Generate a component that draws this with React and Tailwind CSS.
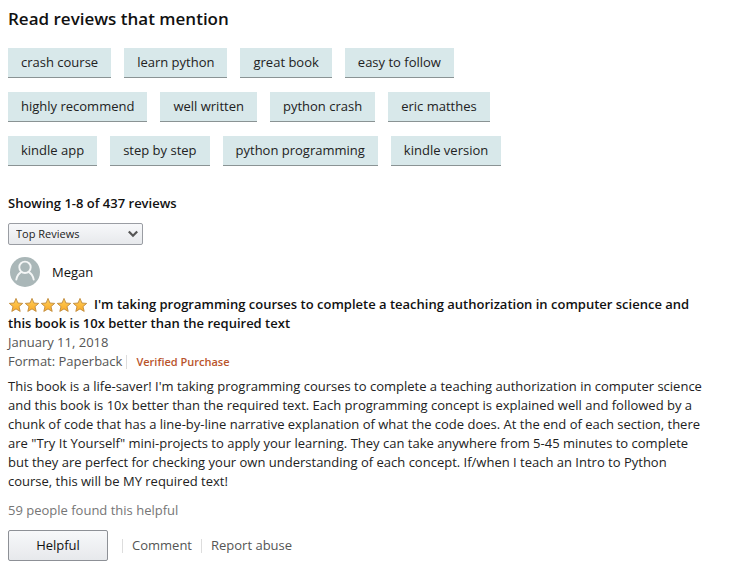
import React from 'react';

const topics = [
  'crash course', 'learn python', 'great book', 'easy to follow',
  'highly recommend', 'well written', 'python crash', 'eric matthes',
  'kindle app', 'step by step', 'python programming', 'kindle version',
];

function Star() {
  return (
    <svg viewBox="0 0 16 16" className="size-4" aria-hidden="true">
      <path
        d="M8 1.4 L9.9 6 L14.7 6.4 L11 9.6 L12.2 14.4 L8 11.9 L3.8 14.4 L5 9.6 L1.3 6.4 L6.1 6 Z"
        fill="url(#starFill)"
        stroke="#c08a3c"
        strokeWidth="0.9"
        strokeLinejoin="round"
      />
    </svg>
  );
}

function Rating() {
  return (
    <span role="img" aria-label="5 out of 5 stars" className="mr-1.5 inline-flex align-text-bottom">
      <svg className="absolute size-0" aria-hidden="true">
        <defs>
          <linearGradient id="starFill" x1="0" y1="0" x2="0" y2="1">
            <stop offset="0" stopColor="#ffd05a" />
            <stop offset="1" stopColor="#f9a928" />
          </linearGradient>
        </defs>
      </svg>
      {[1, 2, 3, 4, 5].map((n) => <Star key={n} />)}
    </span>
  );
}

function Avatar() {
  return (
    <svg viewBox="0 0 30 30" className="size-[30px]" aria-hidden="true">
      <circle cx="15" cy="15" r="15" fill="#aab7b8" />
      <g fill="none" stroke="#f4f6f6" strokeWidth="1.9" strokeLinecap="round">
        <circle cx="15" cy="10.3" r="5.7" />
        <path d="M6.3 22.6 C7 19 8.5 16.6 11.5 14.9 M23.7 22.6 C23 19 21.5 16.6 18.5 14.9" />
      </g>
    </svg>
  );
}

function SortSelect() {
  return (
    <div className="relative mt-2.5 w-[135px]">
      <select
        aria-label="Sort reviews"
        className="block h-[22px] w-full appearance-none rounded-xs border border-[#9a9da3] bg-linear-to-b from-[#f7f8fa] to-[#e7e9ec] pl-[7px] text-[11px] leading-5 text-[#222]"
      >
        <option>Top Reviews</option>
        <option>Most recent</option>
      </select>
      <svg viewBox="0 0 12 8" className="pointer-events-none absolute top-[7px] right-1 h-2 w-3" aria-hidden="true">
        <path d="M1.8 1.5 L6 5.8 L10.2 1.5" fill="none" stroke="#555" strokeWidth="2.2" />
      </svg>
    </div>
  );
}

export default function App() {
  return (
    <main className="bg-white px-2 pt-2 pb-3 font-['Open_Sans','Noto_Sans',sans-serif] text-[13px] leading-[19px] text-[#111]">
      <h2 className="text-[17px] leading-[22px] font-semibold">Read reviews that mention</h2>
      <div className="mt-[18px] flex max-w-[540px] flex-wrap gap-x-[13px] gap-y-3.5">
        {topics.map((topic) => (
          <button key={topic} type="button" className="h-[30px] border-b border-[#8a9394] bg-[#d8e8ea] px-[13px] text-[#222]">
            {topic}
          </button>
        ))}
      </div>

      <h3 className="mt-7 font-semibold">Showing 1-8 of 437 reviews</h3>
      <SortSelect />

      <article className="max-w-[698px]">
        <div className="mt-3 flex items-center gap-3 pl-0.5">
          <Avatar />
          <span>Megan</span>
        </div>
        <h4 className="mt-2 font-semibold">
          <Rating />
          I'm taking programming courses to complete a teaching authorization in computer science and this book is 10x better than the required text
        </h4>
        <p className="text-[#555]">January 11, 2018</p>
        <div className="flex items-center text-[#555]">
          <span>Format: Paperback</span>
          <span className="mr-[9px] ml-1 h-3.5 w-px bg-[#ddd]" />
          <span className="text-[11px] font-semibold text-[#b9552c]">Verified Purchase</span>
        </div>
        <p className="mt-1.5 text-[#222]">
          This book is a life-saver! I'm taking programming courses to complete a teaching authorization in computer science and this book is 10x better than the required text. Each programming concept is explained well and followed by a chunk of code that has a line-by-line narrative explanation of what the code does. At the end of each section, there are "Try It Yourself" mini-projects to apply your learning. They can take anywhere from 5-45 minutes to complete but they are perfect for checking your own understanding of each concept. If/when I teach an Intro to Python course, this will be MY required text!
        </p>
        <p className="mt-2.5 text-[#767676]">59 people found this helpful</p>
        <div className="mt-2.5 flex items-center text-[#555]">
          <button type="button" className="h-[31px] w-[100px] rounded-xs border border-[#8d9096] bg-linear-to-b from-[#f7f8fa] to-[#e7e9ec] text-[#111]">
            Helpful
          </button>
          <span className="mr-[9px] ml-3.5 h-3.5 w-px bg-[#ddd]" />
          <a href="#comment">Comment</a>
          <span className="mx-[9px] h-3.5 w-px bg-[#ddd]" />
          <a href="#report">Report abuse</a>
        </div>
      </article>
    </main>
  );
}
